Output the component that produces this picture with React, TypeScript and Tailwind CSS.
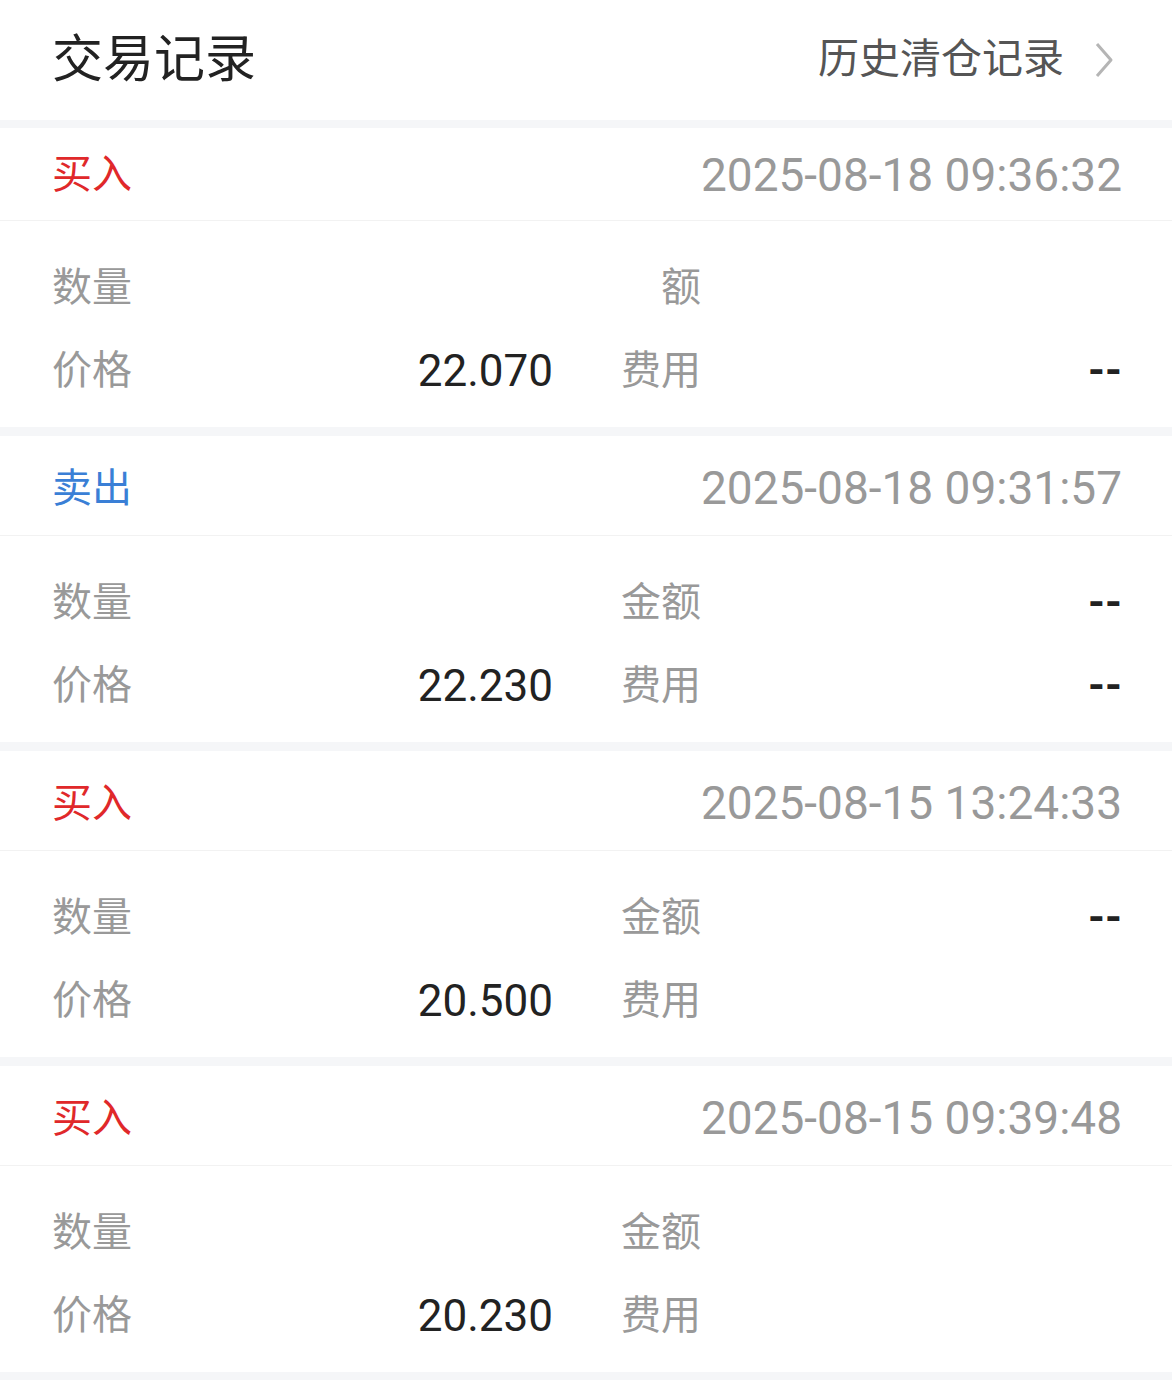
import React from 'react';

type Cell = { label: string; value?: string; offset?: boolean };

interface Trade {
  side: 'buy' | 'sell';
  time: string;
  cells: Cell[];
}

const trades: Trade[] = [
  {
    side: 'buy',
    time: '2025-08-18 09:36:32',
    cells: [
      { label: '数量' },
      { label: '额', offset: true },
      { label: '价格', value: '22.070' },
      { label: '费用', value: '--' },
    ],
  },
  {
    side: 'sell',
    time: '2025-08-18 09:31:57',
    cells: [
      { label: '数量' },
      { label: '金额', value: '--' },
      { label: '价格', value: '22.230' },
      { label: '费用', value: '--' },
    ],
  },
  {
    side: 'buy',
    time: '2025-08-15 13:24:33',
    cells: [
      { label: '数量' },
      { label: '金额', value: '--' },
      { label: '价格', value: '20.500' },
      { label: '费用' },
    ],
  },
  {
    side: 'buy',
    time: '2025-08-15 09:39:48',
    cells: [
      { label: '数量' },
      { label: '金额' },
      { label: '价格', value: '20.230' },
      { label: '费用' },
    ],
  },
];

function TradeCard({ trade, first }: { trade: Trade; first: boolean }) {
  const isBuy = trade.side === 'buy';
  return (
    <div className="bg-white">
      <div
        className={
          first
            ? 'flex h-[93px] items-center justify-between border-b border-[#f2f2f2] pl-[52px] pr-[50px] pt-[2px]'
            : 'flex h-[100px] items-center justify-between border-b border-[#f2f2f2] pl-[52px] pr-[50px] pt-[6px]'
        }
      >
        <span className={isBuy ? 'text-[40px] text-[#e0282a]' : 'text-[40px] text-[#3a7fd6]'}>
          {isBuy ? '买入' : '卖出'}
        </span>
        <span className="text-[46px] text-[#999999]">{trade.time}</span>
      </div>
      <div className="grid h-[206px] grid-cols-2 gap-x-[68px] pb-[15px] pl-[52px] pr-[50px] pt-[25px]">
        {trade.cells.map((c, i) => (
          <div key={i} className="flex h-[83px] items-center justify-between">
            <span className={c.offset ? 'pl-[40px] text-[40px] text-[#999999]' : 'text-[40px] text-[#999999]'}>
              {c.label}
            </span>
            {c.value && (
              <span
                className={
                  c.value === '--'
                    ? 'text-[43px] font-bold text-[#222222]'
                    : 'text-[44px] text-[#222222]'
                }
              >
                {c.value}
              </span>
            )}
          </div>
        ))}
      </div>
    </div>
  );
}

export default function App() {
  return (
    <div
      className="w-[1172px] bg-[#f5f6f8]"
      style={{ fontFamily: "Roboto, 'Noto Sans CJK SC', sans-serif" }}
    >
      <div className="flex h-[120px] items-center justify-between bg-white pl-[52px] pr-[58px]">
        <span className="text-[51px] text-[#222222]">交易记录</span>
        <div className="flex items-center gap-[30px]">
          <span className="text-[41px] text-[#555555]">历史清仓记录</span>
          <svg width="20" height="36" viewBox="0 0 20 36" fill="none">
            <polyline points="3,2 17,18 3,34" stroke="#b5b5b5" strokeWidth="3" strokeLinejoin="round" />
          </svg>
        </div>
      </div>
      <div className="flex flex-col gap-[9px] pb-[8px] pt-[8px]">
        {trades.map((t, i) => (
          <TradeCard key={i} trade={t} first={i === 0} />
        ))}
      </div>
    </div>
  );
}
